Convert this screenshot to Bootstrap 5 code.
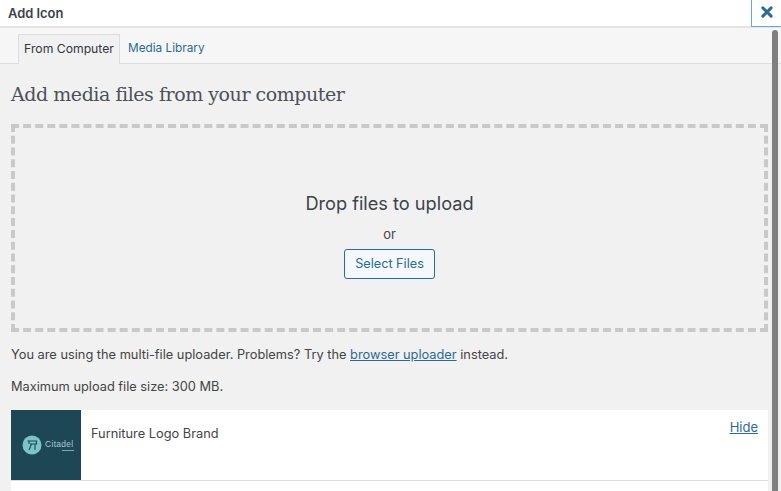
<!DOCTYPE html>
<html lang="en">
<head>
<meta charset="utf-8">
<title>Add Icon</title>
<link href="https://cdn.jsdelivr.net/npm/bootstrap@5.3.0/dist/css/bootstrap.min.css" rel="stylesheet">
<style>
html,body{height:491px;overflow:hidden}
body{background:#f1f1f1;font-family:Inter,"Liberation Sans",sans-serif;font-size:13px;color:#444;position:relative}
.dlg-head{height:28px;background:#fff;border-bottom:2px solid #e4e4e4;padding-left:8px}
.dlg-title{font-size:12.9px;font-weight:600;color:#3c434a;line-height:25px}
.dlg-close{position:absolute;top:0;right:0;width:30px;height:27px;background:#fff;border:1px solid #6aa9d0;border-top:0;border-right:0;padding:0 0 2px}
.tab-strip{height:36px;background:#f6f6f6;border-bottom:1px solid #ddd;padding-left:18px;padding-top:6px}
.tab-item{height:30px;line-height:28px;font-size:12.2px;text-decoration:none;color:#2b6a94;white-space:nowrap}
.tab-on{background:#f1f1f1;border:1px solid #ddd;border-bottom:0;color:#32373c;width:102px;text-align:center}
.tab-off{padding-left:8px;font-size:11.8px}
.pane{padding:0 13px 0 11px}
.pane-title{font-family:"DejaVu Serif","Liberation Serif",serif;font-size:19px;font-weight:400;color:#4c5157;margin:0;line-height:30px;padding-top:15px;letter-spacing:-.45px}
.drop-zone{height:208px;margin-top:15px;border:4px dashed #c9c9c9;padding-top:13px}
.drop-text{font-size:18.2px;color:#3c434a;line-height:24px}
.or-text{font-size:13px;color:#444;line-height:20px;margin-top:9px}
.sel-btn{width:91px;height:30px;margin-top:5px;padding:0;background:#f4f8fa;border:1px solid #2b6a94;border-radius:3px;color:#2b6a94;font-size:12.7px}
.info-line{font-size:12.8px;color:#444;line-height:18px;margin:0}
.info-one{margin-top:14px}
.info-two{margin-top:14px}
.info-line a{color:#2b6a94}
.media-row{margin-top:14px;height:71px;background:#fff;border-bottom:1px solid #ddd}
.thumb-box{width:70px;height:70px;background:#1d4755;gap:3px;padding-left:11px;flex:none}
.thumb-text{font-family:"Liberation Sans",sans-serif;font-size:8.5px;color:#a8cdd2;line-height:9px;letter-spacing:.3px}
.thumb-sub{width:12px;height:1px;background:#7fa9b0;margin:1px 0 0 auto}
.media-name{font-size:12.8px;color:#444;padding:15px 0 0 10px;line-height:18px}
.hide-link{font-size:13px;color:#2b6a94;margin:8px 10px 0 0;line-height:18px}
.next-row{height:20px;background:#fff}
.scroll-thumb{position:absolute;left:772px;top:30px;width:6px;height:470px;background:#7f7f7f;border-radius:3px 3px 0 0}
</style>
</head>
<body>
<div class="dlg-head d-flex align-items-center"><h1 class="dlg-title m-0">Add Icon</h1></div>
<button class="dlg-close d-flex align-items-center justify-content-center" aria-label="Close">
<svg width="12" height="12" viewBox="0 0 13 13"><path d="M2 2 L11 11 M11 2 L2 11" stroke="#2b6a94" stroke-width="3.2" stroke-linecap="round"/></svg>
</button>
<div class="tab-strip d-flex">
<a class="tab-item tab-on" href="#">From Computer</a>
<a class="tab-item tab-off" href="#">Media Library</a>
</div>
<div class="pane">
<h2 class="pane-title">Add media files from your computer</h2>
<div class="drop-zone d-flex flex-column align-items-center justify-content-center">
<div class="drop-text">Drop files to upload</div>
<div class="or-text">or</div>
<button class="sel-btn">Select Files</button>
</div>
<p class="info-line info-one">You are using the multi-file uploader. Problems? Try the <a href="#">browser uploader</a> instead.</p>
<p class="info-line info-two">Maximum upload file size: 300 MB.</p>
<div class="media-row d-flex justify-content-between">
<div class="d-flex">
<div class="thumb-box d-flex align-items-center">
<svg width="20" height="20" viewBox="0 0 20 20"><circle cx="10" cy="10" r="9.5" fill="#7cc4c9"/><path d="M5.5 6H14.5V9H8M7 6V9M9.5 9L7 15M13 9V15" stroke="#1d4755" stroke-width="1.1" fill="none"/></svg>
<div><div class="thumb-text">Citadel</div><div class="thumb-sub"></div></div>
</div>
<div class="media-name">Furniture Logo Brand</div>
</div>
<a class="hide-link" href="#">Hide</a>
</div>
<div class="next-row"></div>
</div>
<div class="scroll-thumb"></div>
</body>
</html>
